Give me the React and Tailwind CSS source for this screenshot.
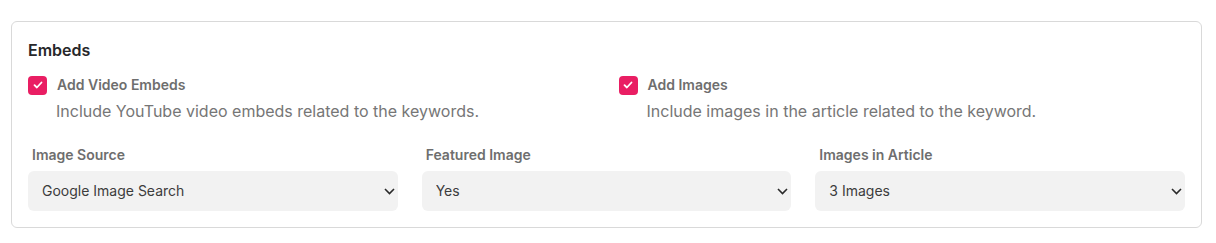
import { useState } from "react";

// Embeds settings card: two toggles plus three image dropdowns.
function Check({ checked, onChange, label, hint }) {
  return (
    <div className="flex flex-col">
      <label className="flex cursor-pointer items-center gap-2.5">
        <span
          className={
            "flex h-[19px] w-[19px] items-center justify-center rounded-[4px] " +
            (checked ? "bg-[#e91e63]" : "border border-[#c4c4c4] bg-white")
          }
          onClick={onChange}
        >
          {checked && (
            <svg width="10" height="8" viewBox="0 0 10 8" fill="none">
              <path
                d="M1.5 4.2 3.9 6.5 8.5 1.5"
                stroke="white"
                strokeWidth="1.8"
                strokeLinecap="round"
                strokeLinejoin="round"
              />
            </svg>
          )}
        </span>
        <span className="text-sm font-semibold text-[#6e6e6e]">{label}</span>
      </label>
      <p className="mt-1 pl-[28px] text-base leading-6 text-[#767676]">{hint}</p>
    </div>
  );
}

function Dropdown({ label, value, options, onChange }) {
  return (
    <div className="flex flex-col">
      <span className="pl-1 text-sm font-semibold leading-5 text-[#6e6e6e]">{label}</span>
      <div className="relative mt-1.5">
        <select
          className="h-10 w-full appearance-none rounded-md bg-[#f2f2f2] pl-3.5 pr-8 text-sm text-[#3c3c3c] outline-none"
          value={value}
          onChange={(event) => onChange(event.target.value)}
        >
          {options.map((option) => (
            <option key={option}>{option}</option>
          ))}
        </select>
        <svg
          className="pointer-events-none absolute right-[3px] top-[17px]"
          width="11"
          height="7"
          viewBox="0 0 11 7"
          fill="none"
        >
          <path d="M1 1 5.5 5.5 10 1" stroke="#2a2a2a" strokeWidth="1.6" />
        </svg>
      </div>
    </div>
  );
}

export default function App() {
  const [videos, setVideos] = useState(true);
  const [images, setImages] = useState(true);
  const [source, setSource] = useState("Google Image Search");
  const [featured, setFeatured] = useState("Yes");
  const [count, setCount] = useState("3 Images");

  return (
    <div className="bg-white px-[11px] pt-[21px] font-['Inter',sans-serif]">
      <section className="w-[1191px] rounded-md border border-[#d9d9d9] p-4">
        <h2 className="text-base font-semibold leading-6 text-[#27272a]">Embeds</h2>

        <div className="mt-[13px] grid grid-cols-2 gap-6">
          <Check
            checked={videos}
            onChange={() => setVideos(!videos)}
            label="Add Video Embeds"
            hint="Include YouTube video embeds related to the keywords."
          />
          <Check
            checked={images}
            onChange={() => setImages(!images)}
            label="Add Images"
            hint="Include images in the article related to the keyword."
          />
        </div>

        <div className="mt-[22px] grid grid-cols-3 gap-6">
          <Dropdown
            label="Image Source"
            value={source}
            onChange={setSource}
            options={["Google Image Search", "Unsplash", "AI Generated"]}
          />
          <Dropdown label="Featured Image" value={featured} onChange={setFeatured} options={["Yes", "No"]} />
          <Dropdown
            label="Images in Article"
            value={count}
            onChange={setCount}
            options={["1 Image", "2 Images", "3 Images", "4 Images", "5 Images"]}
          />
        </div>
      </section>
    </div>
  );
}
